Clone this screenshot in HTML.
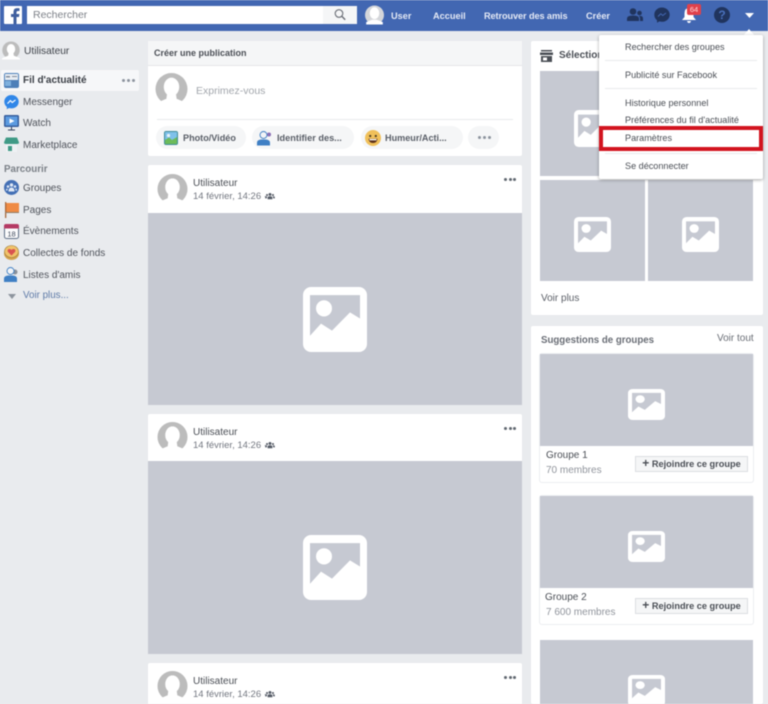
<!DOCTYPE html>
<html lang="fr"><head><meta charset="utf-8"><title>Facebook</title>
<style>
html,body{margin:0;padding:0;width:768px;height:704px;overflow:hidden;background:#e9ebee}
#r{position:relative;width:768px;height:704px;overflow:hidden;font-family:"Liberation Sans",sans-serif;color:#4b4f56;filter:blur(.45px)}
.a,.t,svg.i{position:absolute}
.t{white-space:nowrap;line-height:14px;font-size:10px}
.b{font-weight:bold}
.w{background:#fff;position:absolute}
.g{background:#c6c9d2;position:absolute}
.h{color:#e4e9f5;font-weight:bold;font-size:9.2px;top:9px}
.n{font-size:10px;color:#50545c}
.m{font-size:9.1px;color:#4b4f56;left:625px}
.pill{position:absolute;background:#f5f6f7;border-radius:12px;height:23px;top:126px}
.d{position:absolute;width:3px;height:3px;border-radius:50%;background:#606770}
.sep{position:absolute;height:1px;background:#e9eaed}
.btn{position:absolute;left:635px;width:111px;height:14px;background:#f5f6f7;border:1px solid #dcdee2;font-size:9.2px;font-weight:bold;color:#4b4f56;line-height:14px;text-align:center;white-space:nowrap}
</style></head><body><div id="r">
<svg width="0" height="0" style="position:absolute"><defs>
<symbol id="pic" viewBox="0 0 64 64" preserveAspectRatio="none"><rect width="64" height="64" rx="8" fill="#fff"/><path fill="#c6c9d2" d="M7 8H57V31L47 25L29 43L18 36L7 48Z"/><circle cx="21" cy="21" r="8" fill="#fff"/></symbol>
<symbol id="av" viewBox="0 0 32 32"><circle cx="16" cy="15.5" r="15.5" fill="#bcbcbc"/><ellipse cx="16" cy="13.5" rx="7.5" ry="9" fill="#fff"/><path fill="#fff" d="M0 32V30L4 28L11 25L12 18H20L21 25L28 28L32 30V32Z"/></symbol>
<symbol id="grp" viewBox="0 0 12 10"><circle cx="6" cy="3" r="1.8" fill="#555b66"/><circle cx="2.3" cy="3.8" r="1.3" fill="#555b66"/><circle cx="9.7" cy="3.8" r="1.3" fill="#555b66"/><path fill="#555b66" d="M3 9V7Q3 5.300 6 5.300T9 7V9ZM0 8V6.500Q0 5.300 2.300 5.300L2 8ZM12 8V6.500Q12 5.300 9.700 5.300L10 8Z"/></symbol>
</defs></svg>

<!-- header -->
<div class="a" style="left:0;top:0;width:768px;height:31px;background:#4267b2"></div>
<div class="a" style="left:4px;top:6px;width:18px;height:18px;background:#fff;border-radius:1px;overflow:hidden"><svg width="18" height="18" viewBox="0 0 18 18"><path fill="#3f5f9f" d="M12.500 18V11H15L15.400 8H12.500V6.300Q12.500 5 14 5H15.500V2.300Q14.500 2.100 13.200 2.100Q9.500 2.100 9.500 5.800V8H7V11H9.500V18Z"/></svg></div>
<div class="w" style="left:27px;top:6px;width:330px;height:18px"></div>
<div class="a" style="left:323px;top:6px;width:34px;height:18px;background:#f5f6f7"></div>
<div class="t" style="left:33px;top:8px;font-size:10.500px;color:#7d8188">Rechercher</div>
<svg class="i" style="left:333px;top:8px" width="14" height="14" viewBox="0 0 14 14"><circle cx="6" cy="5.500" r="3.800" fill="none" stroke="#6a6e76" stroke-width="1.100"/><path d="M8.800 8.300L12.200 11.700" stroke="#6a6e76" stroke-width="1.400"/></svg>
<svg class="i" style="left:365px;top:5px" width="19" height="20" viewBox="0 0 32 32"><circle cx="16" cy="16" r="16" fill="#d4d6da"/><ellipse cx="16" cy="13" rx="8" ry="10" fill="#fff"/><path fill="#fff" d="M2 32V28L12 24H20L30 28V32Z"/></svg>
<div class="t h" style="left:391px">User</div>
<div class="t h" style="left:433px">Accueil</div>
<div class="t h" style="left:484px;letter-spacing:-.1px">Retrouver des amis</div>
<div class="t h" style="left:586px">Créer</div>
<svg class="i" style="left:627px;top:8px" width="16" height="14" viewBox="0 0 16 14"><circle cx="6" cy="3.500" r="3.300" fill="#20345e"/><circle cx="12.500" cy="5" r="2.300" fill="#20345e"/><path fill="#20345e" d="M0 13V10.500Q0 7.500 6 7.500T12 10.500V13ZM13 13V10Q13 8.700 11.800 8Q16 7.500 16 10.500V13Z"/></svg>
<svg class="i" style="left:654px;top:7px" width="16" height="16" viewBox="0 0 16 16"><path fill="#20345e" d="M8 .500C3.600.500 .3 3.700.3 7.700C.3 10 1.300 11.900 3 13.200V15.700L5.300 14.400Q6.600 14.800 8 14.800C12.400 14.800 15.700 11.600 15.700 7.700S12.400.500 8 .500Z"/><path d="M4 9.500L6.800 6.800L8.800 8.500L12 6" fill="none" stroke="#4267b2" stroke-width="1"/></svg>
<svg class="i" style="left:681px;top:6px" width="16" height="18" viewBox="0 0 16 18"><path fill="#fff" d="M8 2Q12.500 2 12.500 7.500V11L15 14H1L3.500 11V7.500Q3.500 2 8 2ZM6 15H10Q9.500 17 8 17T6 15Z"/></svg>
<div class="a" style="left:687px;top:4px;width:14px;height:11px;border-radius:2px;background:#e0414b;color:#ffd7d7;font-size:7.500px;text-align:center;line-height:11px">64</div>
<div class="a" style="left:714px;top:7px;width:16px;height:16px;border-radius:50%;background:#20345e;color:#4a71bd;font-size:12px;font-weight:bold;text-align:center;line-height:16px">?</div>
<svg class="i" style="left:745px;top:13px" width="9" height="5" viewBox="0 0 11 6" preserveAspectRatio="none"><path fill="#fff" d="M0 0H11L5.500 6Z"/></svg>

<!-- sidebar -->
<svg class="i" style="left:2px;top:41px" width="18" height="19"><use href="#av"/></svg>
<div class="t" style="left:24px;top:45px;font-size:10.200px;color:#3f434a">Utilisateur</div>
<div class="a" style="left:1px;top:70px;width:138px;height:21px;background:#f6f7f9;border-radius:2px"></div>
<svg class="i" style="left:4px;top:73px" width="15" height="15" viewBox="0 0 15 15"><rect width="15" height="15" rx="2" fill="#4d7fb8"/><rect x="1" y="1" width="13" height="6" fill="#e8edf3"/><rect x="2" y="3" width="4" height="1.500" fill="#7f8a99"/><rect x="8" y="3" width="5" height="1" fill="#7f8a99"/><rect x="1" y="8" width="6" height="5" fill="#7fb0dd"/></svg>
<div class="t b" style="left:23px;top:74px;font-size:10px;color:#3c4047">Fil d'actualité</div>
<div class="d" style="left:122px;top:79px;background:#8d949e"></div><div class="d" style="left:127px;top:79px;background:#8d949e"></div><div class="d" style="left:132px;top:79px;background:#8d949e"></div>
<svg class="i" style="left:4px;top:94px" width="15" height="16" viewBox="0 0 16 16"><path fill="#2f86e8" d="M8 .500C3.600.500 .3 3.700.3 7.700C.3 10 1.300 11.900 3 13.200V15.700L5.300 14.400Q6.600 14.800 8 14.800C12.400 14.800 15.700 11.600 15.700 7.700S12.400.500 8 .500Z"/><path d="M3.700 9.700L6.800 6.500L8.800 8.500L12.300 5.800" fill="none" stroke="#fff" stroke-width="1.200"/></svg>
<div class="t n" style="left:23px;top:96px">Messenger</div>
<svg class="i" style="left:4px;top:115px" width="15" height="16" viewBox="0 0 15 16"><rect width="15" height="12" rx="1.500" fill="#365f9e"/><rect x="1.500" y="1.500" width="12" height="9" fill="#5c9be0"/><path fill="#fff" d="M5.500 3.500L10.500 6L5.500 8.500Z"/><path fill="#33415c" d="M7 12H8V14.500H11V15.500H4V14.500H7Z"/></svg>
<div class="t n" style="left:23px;top:117px">Watch</div>
<svg class="i" style="left:4px;top:137px" width="15" height="15" viewBox="0 0 15 15"><rect x="2" y="5" width="11" height="10" fill="#eef1f4"/><path fill="#3f9a86" d="M2 .500H13L15 5.500Q15 7 13 7H2Q0 7 0 5.500Z"/><rect x="4" y="9" width="4" height="5" fill="#3f9a86"/></svg>
<div class="t n" style="left:23px;top:139px">Marketplace</div>
<div class="t b" style="left:4px;top:163px;font-size:9.800px;color:#7b8087">Parcourir</div>
<svg class="i" style="left:4px;top:180px" width="15" height="15" viewBox="0 0 15 15"><circle cx="7.500" cy="7.500" r="7.500" fill="#4470b5"/><circle cx="7.500" cy="5" r="1.700" fill="#dfe8f5"/><circle cx="4" cy="6.500" r="1.300" fill="#dfe8f5"/><circle cx="11" cy="6.500" r="1.300" fill="#dfe8f5"/><path fill="#dfe8f5" d="M4.500 11.500Q4.500 7.500 7.500 7.500T10.500 11.500ZM2 10.500Q2 8.500 3.500 8.500L3.500 10.500ZM13 10.500Q13 8.500 11.500 8.500L11.500 10.500Z"/></svg>
<div class="t n" style="left:23px;top:182px">Groupes</div>
<svg class="i" style="left:5px;top:202px" width="14" height="16" viewBox="0 0 14 16"><rect x="1" y="1" width="13" height="9" fill="#ef8b45"/><rect x="0" y="0" width="1.300" height="16" fill="#a8683b"/><rect x="0" y="10" width="14" height="1" fill="#8e7a63"/></svg>
<div class="t n" style="left:23px;top:204px">Pages</div>
<svg class="i" style="left:4px;top:224px" width="15" height="15" viewBox="0 0 15 15"><rect x=".5" y=".5" width="14" height="14" rx="2" fill="#fbfbfc" stroke="#5f6f85"/><path fill="#b43a64" d="M0 2Q0 0 2 0H13Q15 0 15 2V4.500H0Z"/><text x="7.500" y="12.500" font-size="7.500" font-family="Liberation Sans" text-anchor="middle" fill="#3f4a5c">18</text></svg>
<div class="t n" style="left:23px;top:225px">Évènements</div>
<svg class="i" style="left:4px;top:245px" width="15" height="15" viewBox="0 0 15 15"><ellipse cx="7.500" cy="8.500" rx="7.500" ry="6.500" fill="#d4a24c"/><ellipse cx="7.500" cy="6.500" rx="7" ry="6" fill="#f0c36a" stroke="#9c7a3a" stroke-width=".6"/><path fill="#d9534f" d="M7.500 10.500L3.800 6.800Q3 4 5.500 4Q7 4 7.500 5Q8 4 9.500 4Q12 4 11.200 6.800Z"/></svg>
<div class="t n" style="left:23px;top:247px">Collectes de fonds</div>
<svg class="i" style="left:4px;top:267px" width="15" height="15" viewBox="0 0 15 15"><circle cx="11" cy="5" r="2.500" fill="#8a9099"/><circle cx="6.500" cy="4" r="3.500" fill="#f2f4f7" stroke="#3f7fc4" stroke-width=".9"/><path fill="#3f7fc4" d="M0 15V11.500Q0 9 4 8.500H9Q13 9 13 11.500V15Z"/></svg>
<div class="t n" style="left:23px;top:269px">Listes d'amis</div>
<svg class="i" style="left:8px;top:294px" width="8" height="5" viewBox="0 0 8 5"><path fill="#8d949e" d="M0 0H8L4 5Z"/></svg>
<div class="t" style="left:23px;top:289px;font-size:9.800px;color:#5f7ba8">Voir plus...</div>

<!-- composer -->
<div class="w" style="left:148px;top:41px;width:374px;height:115px;border-radius:2px"></div>
<div class="a" style="left:148px;top:41px;width:374px;height:24px;background:#f5f6f7;border-bottom:1px solid #e5e6e9"></div>
<div class="t b" style="left:154px;top:46px;font-size:9px;color:#4b4f56">Créer une publication</div>
<svg class="i" style="left:155px;top:73px" width="33" height="33"><use href="#av"/></svg>
<div class="t" style="left:196px;top:84px;font-size:10.500px;color:#a2a6ac">Exprimez-vous</div>
<div class="sep" style="left:157px;top:119px;width:356px"></div>
<div class="pill" style="left:156px;width:90px"></div>
<div class="pill" style="left:252px;width:102px"></div>
<div class="pill" style="left:361px;width:102px"></div>
<div class="pill" style="left:468px;width:31px"></div>
<svg class="i" style="left:164px;top:131px" width="14" height="14" viewBox="0 0 14 14"><rect width="14" height="14" rx="2" fill="#3f8c99"/><rect x="1" y="1" width="12" height="12" fill="#7fc1ea"/><circle cx="4.500" cy="4.500" r="1.600" fill="#e8f3fb"/><path fill="#6cbb5a" d="M1 13V9L5 6.500L8 9L13 6V13Z"/></svg>
<div class="t b" style="left:183px;top:131px;font-size:9.100px;color:#5a5f68">Photo/Vidéo</div>
<svg class="i" style="left:257px;top:130px" width="15" height="16" viewBox="0 0 15 15"><circle cx="12" cy="4" r="2" fill="#8b6fb5"/><circle cx="6.500" cy="4.500" r="3.500" fill="#f2f4f7" stroke="#3f7fc4" stroke-width=".9"/><path fill="#3f7fc4" d="M0 15V12Q0 9.500 4 9H9Q13 9.500 13 12V15Z"/></svg>
<div class="t b" style="left:277px;top:131px;font-size:9.200px;color:#5a5f68">Identifier des...</div>
<svg class="i" style="left:365px;top:130px" width="16" height="16" viewBox="0 0 16 16"><circle cx="8" cy="8" r="8" fill="#f0c05a"/><circle cx="5.200" cy="6" r="1.100" fill="#4a3a22"/><circle cx="10.800" cy="6" r="1.100" fill="#4a3a22"/><path fill="#5c3018" d="M3.500 8.800H12.500Q12 13 8 13T3.500 8.800Z"/><rect x="4.500" y="9" width="7" height="1.300" fill="#fff"/></svg>
<div class="t b" style="left:385px;top:131px;font-size:9.100px;color:#5a5f68">Humeur/Acti...</div>
<div class="d" style="left:478px;top:136px;background:#8d949e"></div><div class="d" style="left:483px;top:136px;background:#8d949e"></div><div class="d" style="left:488px;top:136px;background:#8d949e"></div>

<!-- post 1 -->
<div class="w" style="left:148px;top:165px;width:374px;height:48px;border-radius:2px 2px 0 0"></div>
<svg class="i" style="left:157px;top:174px" width="31" height="31"><use href="#av"/></svg>
<div class="t" style="left:193px;top:177px;font-size:10px;color:#4b4f56">Utilisateur</div>
<div class="t" style="left:193px;top:190px;font-size:9.500px;color:#737780">14 février, 14:26 ·</div>
<svg class="i" style="left:265px;top:192px" width="10" height="8"><use href="#grp"/></svg>
<div class="d" style="left:504px;top:178px"></div><div class="d" style="left:508.500px;top:178px"></div><div class="d" style="left:513px;top:178px"></div>
<div class="g" style="left:148px;top:213px;width:374px;height:192px"></div>
<svg class="i" style="left:303px;top:287px" width="64" height="65"><use href="#pic"/></svg>

<!-- post 2 -->
<div class="w" style="left:148px;top:414px;width:374px;height:47px;border-radius:2px 2px 0 0"></div>
<svg class="i" style="left:157px;top:422px" width="31" height="31"><use href="#av"/></svg>
<div class="t" style="left:193px;top:426px;font-size:10px;color:#4b4f56">Utilisateur</div>
<div class="t" style="left:193px;top:439px;font-size:9.500px;color:#737780">14 février, 14:26 ·</div>
<svg class="i" style="left:265px;top:441px" width="10" height="8"><use href="#grp"/></svg>
<div class="d" style="left:504px;top:427px"></div><div class="d" style="left:508.500px;top:427px"></div><div class="d" style="left:513px;top:427px"></div>
<div class="g" style="left:148px;top:461px;width:374px;height:193px"></div>
<svg class="i" style="left:303px;top:535px" width="64" height="65"><use href="#pic"/></svg>

<!-- post 3 -->
<div class="w" style="left:148px;top:663px;width:374px;height:41px;border-radius:2px 2px 0 0"></div>
<svg class="i" style="left:157px;top:671px" width="31" height="31"><use href="#av"/></svg>
<div class="t" style="left:193px;top:675px;font-size:10px;color:#4b4f56">Utilisateur</div>
<div class="t" style="left:193px;top:688px;font-size:9.500px;color:#737780">14 février, 14:26 ·</div>
<svg class="i" style="left:265px;top:690px" width="10" height="8"><use href="#grp"/></svg>
<div class="d" style="left:504px;top:676px"></div><div class="d" style="left:508.500px;top:676px"></div><div class="d" style="left:513px;top:676px"></div>

<!-- right: selection -->
<div class="w" style="left:531px;top:41px;width:232px;height:274px;border-radius:2px"></div>
<svg class="i" style="left:540px;top:50px" width="13" height="12" viewBox="0 0 13 12"><path fill="#4b4f56" d="M1 0H12V1.500H1ZM0 2.500H13V5H0ZM1 6H12V12H1Z"/><rect x="3" y="7.500" width="4" height="3" fill="#fff"/></svg>
<div class="t b" style="left:559px;top:49px;font-size:10px;color:#4b4f56">Sélection</div>
<div class="g" style="left:540px;top:71px;width:213px;height:105px"></div>
<svg class="i" style="left:574px;top:110px" width="37" height="37"><use href="#pic"/></svg>
<div class="g" style="left:540px;top:180px;width:105px;height:101px"></div>
<svg class="i" style="left:574px;top:217px" width="37" height="35"><use href="#pic"/></svg>
<div class="g" style="left:648px;top:180px;width:105px;height:101px"></div>
<svg class="i" style="left:682px;top:217px" width="37" height="35"><use href="#pic"/></svg>
<div class="t" style="left:541px;top:292px;font-size:10px;color:#5c6068">Voir plus</div>

<!-- right: groups -->
<div class="w" style="left:531px;top:326px;width:232px;height:378px;border-radius:2px"></div>
<div class="t b" style="left:541px;top:334px;font-size:9.700px;color:#6a6e76">Suggestions de groupes</div>
<div class="t" style="left:717px;top:332px;font-size:10px;color:#6a6e76">Voir tout</div>

<div class="a" style="left:540px;top:354px;width:213px;height:128px;border-radius:2px;box-shadow:0 0 0 1px #eceef1"></div>
<div class="g" style="left:540px;top:354px;width:213px;height:92px"></div>
<svg class="i" style="left:628px;top:389px" width="37" height="31"><use href="#pic"/></svg>
<div class="t" style="left:546px;top:449px;font-size:10px;color:#4b4f56">Groupe 1</div>
<div class="t" style="left:546px;top:464px;font-size:10px;color:#90949c">70 membres</div>
<div class="btn" style="top:456px"><b style="font-size:12px;line-height:12px">+</b> Rejoindre ce groupe</div>

<div class="a" style="left:540px;top:496px;width:213px;height:128px;border-radius:2px;box-shadow:0 0 0 1px #eceef1"></div>
<div class="g" style="left:540px;top:496px;width:213px;height:92px"></div>
<svg class="i" style="left:628px;top:531px" width="37" height="31"><use href="#pic"/></svg>
<div class="t" style="left:545px;top:591px;font-size:10px;color:#4b4f56">Groupe 2</div>
<div class="t" style="left:546px;top:606px;font-size:10px;color:#90949c">7 600 membres</div>
<div class="btn" style="top:598px"><b style="font-size:12px;line-height:12px">+</b> Rejoindre ce groupe</div>

<div class="g" style="left:540px;top:640px;width:213px;height:64px"></div>
<svg class="i" style="left:628px;top:675px" width="37" height="31"><use href="#pic"/></svg>

<!-- dropdown -->
<svg class="i" style="left:743px;top:29px" width="12" height="7" viewBox="0 0 12 7"><path fill="#fff" d="M0 7L6 0L12 7Z"/></svg>
<div class="w" style="left:599px;top:35px;width:164px;height:144px;box-shadow:0 1px 3px rgba(0,0,0,.35);border-radius:2px"></div>
<div class="t m" style="top:40px">Rechercher des groupes</div>
<div class="sep" style="left:605px;top:60px;width:152px"></div>
<div class="t m" style="top:68px">Publicité sur Facebook</div>
<div class="sep" style="left:605px;top:88px;width:152px"></div>
<div class="t m" style="top:96px">Historique personnel</div>
<div class="t m" style="top:113px">Préférences du fil d'actualité</div>
<div class="t m" style="top:131px">Paramètres</div>
<div class="sep" style="left:605px;top:153px;width:152px"></div>
<div class="t m" style="top:159px">Se déconnecter</div>
<div class="a" style="left:599px;top:126px;width:156px;height:17px;border:4px solid #d2141f"></div>
</div></body></html>
